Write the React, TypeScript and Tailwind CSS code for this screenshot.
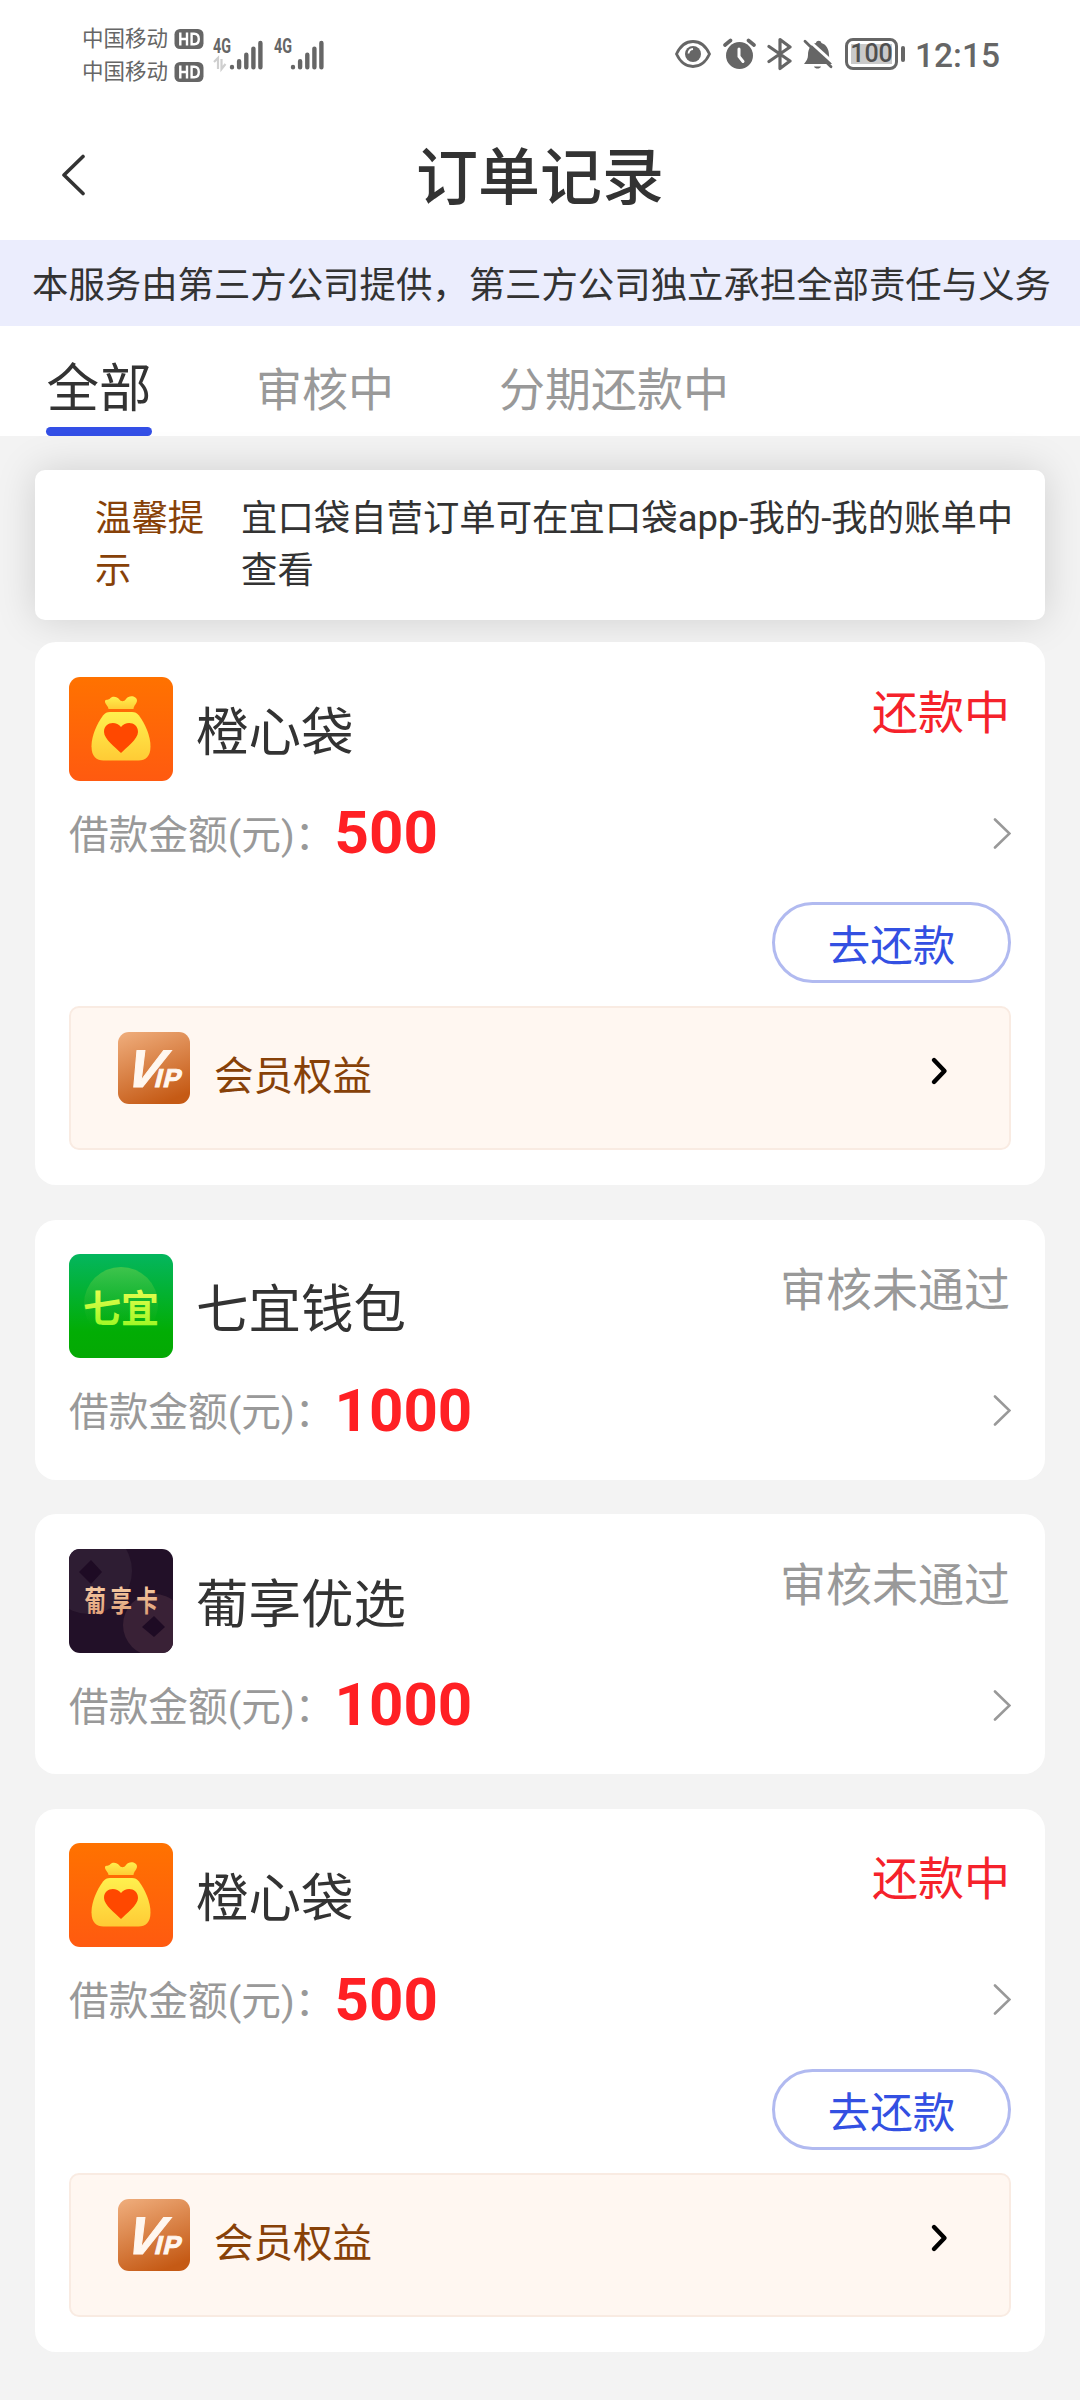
import type { ReactNode } from "react";

function HdBadge() {
  return (
    <svg width="30" height="20" viewBox="0 0 30 20" className="ml-[6px]">
      <rect x="0.5" y="0" width="29" height="20" rx="5.5" fill="#666" />
      <g stroke="#fff" strokeWidth="2.4" fill="none">
        <path d="M6.3 3.6v12.8M13 3.6v12.8M6.3 10H13" />
        <path d="M17.6 4.7h2.6c2.8 0 4.6 2 4.6 5.3s-1.8 5.3-4.6 5.3h-2.6z" />
      </g>
    </svg>
  );
}

function Carrier() {
  return (
    <div className="flex h-[33px] items-center text-[21.5px] leading-[33px] text-[#666]">
      <span>中国移动</span>
      <HdBadge />
    </div>
  );
}

function Signal({ data = false }: { data?: boolean }) {
  return (
    <svg width="61" height="40" viewBox="0 0 61 40">
      <text
        x="2"
        y="18"
        fontFamily="Roboto"
        fontWeight="700"
        fontSize="19.5"
        fill="#666"
        textLength="18"
        lengthAdjust="spacingAndGlyphs"
      >
        4G
      </text>
      {data && (
        <g stroke="#cfcfcf" strokeWidth="2.2" fill="none">
          <path d="M3 27l4-4v11M10.5 24v10l4-5" />
        </g>
      )}
      <g stroke="#666" strokeWidth="4.4" strokeLinecap="round">
        <path d="M21 32v.2M28.1 26.2v6M35.3 19.8v12.4M42.4 13.6v18.6M49.4 8v24.2" />
      </g>
    </svg>
  );
}

function StatusBar() {
  return (
    <div className="flex h-[112px] shrink-0 items-start pl-[82px] pr-[80px] text-[#666]">
      <div className="mt-[22px] flex flex-col">
        <Carrier />
        <Carrier />
      </div>
      <div className="ml-[7px] mt-[35px] flex">
        <Signal data />
        <Signal />
      </div>
      <div className="ml-auto mt-[32px] flex h-[44px] items-center">
        <svg width="38" height="30" viewBox="0 0 38 30">
          <path
            d="M2.5 15C6 7.5 12 2.5 19 2.5S32 7.5 35.5 15C32 22.5 26 27.5 19 27.5S6 22.5 2.5 15z"
            fill="none"
            stroke="#666"
            strokeWidth="2.8"
          />
          <circle cx="19" cy="15" r="8" fill="#666" />
          <path d="M14.5 14.5a5 5 0 0 1 4.5-4.5" stroke="#fff" strokeWidth="1.8" fill="none" />
        </svg>
        <svg width="33" height="32" viewBox="0 0 33 32" className="ml-[11px]">
          <circle cx="16.5" cy="17.5" r="13.5" fill="#666" />
          <path d="M2 7l5.5-4.5M31 7l-5.5-4.5" stroke="#fff" strokeWidth="6" />
          <path d="M2 7l5.5-4.5M31 7l-5.5-4.5" stroke="#666" strokeWidth="3.6" strokeLinecap="round" />
          <path d="M16 11v7.5l4 5" stroke="#fff" strokeWidth="3" strokeLinecap="round" fill="none" />
        </svg>
        <svg width="26" height="34" viewBox="0 0 26 34" className="ml-[11px]">
          <path
            d="M2 9.500L23 24 13 31.500V2.500L23 10 2 24.500"
            fill="none"
            stroke="#666"
            strokeWidth="3.200"
            strokeLinejoin="round"
            strokeLinecap="round"
          />
        </svg>
        <svg width="30" height="32" viewBox="0 0 30 32" className="ml-[10px]">
          <path
            d="M1 26c2.500-3 4-5.500 4-9 0-6 3-11 8-12 .4-3 5-3 5.400 0 4.600 1.400 7.600 6 7.600 12 0 3.500 1 6 3 9z"
            fill="#666"
          />
          <path d="M11 28.500h7c-1 2.700-6 2.700-7 0z" fill="#666" />
          <path d="M3.500 0.500L31 25.500" stroke="#fff" strokeWidth="3" />
          <path d="M2 3.300l26 25.400" stroke="#666" strokeWidth="2.800" strokeLinecap="round" />
        </svg>
        <div className="ml-[12px] flex items-center">
          <div className="flex h-[32px] w-[53px] items-center justify-center rounded-[8px] border-[3px] border-[#666] p-[3px]">
            <div className="flex h-[20px] w-full items-center justify-center bg-[#c9c9c9] text-[25px] leading-[20px] font-medium text-[#4f4f4f]">
              100
            </div>
          </div>
          <div className="ml-[3px] h-[16px] w-[4px] rounded-full bg-[#666]" />
        </div>
        <span className="ml-[10px] mt-[3px] text-[33.500px] leading-[44px] font-medium">12:15</span>
      </div>
    </div>
  );
}

function BagIcon() {
  return (
    <svg width="104" height="104" viewBox="0 0 104 104" className="rounded-[11px]">
      <defs>
        <linearGradient id="bag-bg" x1="0" y1="0" x2="0" y2="1">
          <stop offset="0" stopColor="#ff7200" />
          <stop offset="1" stopColor="#ff5a10" />
        </linearGradient>
        <linearGradient id="bag-fill" x1="0" y1="0" x2="0" y2="1">
          <stop offset="0" stopColor="#fff04e" />
          <stop offset="1" stopColor="#ffcb35" />
        </linearGradient>
      </defs>
      <rect width="104" height="104" fill="url(#bag-bg)" />
      <path
        d="M39.500 32c0-3-4-5-3.500-8 0-1.500 3-1 4.500-2 3-4 8-2 9.500 0 2 3 5 3 7 0 3-4.500 11-3 11 1.500 0 3-3 4.500-3.500 8.500z"
        fill="url(#bag-fill)"
      />
      <path
        d="M41 35h22c3 0 5 1 7 3.500 6 8 11.500 20 11.500 31 0 10-5 14-12 14h-35c-7 0-12-4-12-14 0-11 5.500-23 11.500-31 2-2.500 4-3.500 7-3.500z"
        fill="url(#bag-fill)"
      />
      <path
        d="M52 76C47 71 35 62 35 55c0-10 12-11.500 17-5 5-6.500 17-5 17 5 0 7-12 16-17 21z"
        fill="#ff4800"
      />
    </svg>
  );
}

function SevenIcon() {
  return (
    <svg width="104" height="104" viewBox="0 0 104 104" className="rounded-[11px]">
      <defs>
        <linearGradient id="seven-bg" x1="0" y1="0" x2="0" y2="1">
          <stop offset="0" stopColor="#04b65e" />
          <stop offset="0.75" stopColor="#02ad04" />
          <stop offset="1" stopColor="#04a904" />
        </linearGradient>
        <linearGradient id="seven-disc" x1="0" y1="0" x2="0" y2="1">
          <stop offset="0" stopColor="#3fc44c" />
          <stop offset="0.8" stopColor="#20b520" stopOpacity="0" />
        </linearGradient>
        <linearGradient id="seven-text" x1="0" y1="0" x2="0" y2="1">
          <stop offset="0" stopColor="#ffff5c" />
          <stop offset="1" stopColor="#92f71e" />
        </linearGradient>
      </defs>
      <rect width="104" height="104" fill="url(#seven-bg)" />
      <circle cx="52" cy="50" r="37" fill="url(#seven-disc)" />
      <text
        x="14"
        y="67.500"
        fontFamily="Noto Sans CJK SC"
        fontWeight="700"
        fontSize="38"
        fill="url(#seven-text)"
        textLength="76"
      >
        七宜
      </text>
    </svg>
  );
}

function GrapeIcon() {
  return (
    <svg width="104" height="104" viewBox="0 0 104 104" className="rounded-[11px]">
      <defs>
        <linearGradient id="grape-text" x1="0" y1="0" x2="0" y2="1">
          <stop offset="0" stopColor="#fbd6ae" />
          <stop offset="1" stopColor="#dd9a72" />
        </linearGradient>
      </defs>
      <rect width="104" height="104" fill="#221028" />
      <circle cx="20" cy="22" r="43" fill="#2e1d33" />
      <path d="M10 23l12-12 11 12-11 12z" fill="#1e0b24" />
      <circle cx="85" cy="76" r="31" fill="#392136" />
      <path d="M73 78l12-11 11 11-11 10z" fill="#1e0b24" />
      <text
        transform="translate(15.500 62.500) scale(0.74 1)"
        fontFamily="Noto Sans CJK SC"
        fontWeight="700"
        fontSize="29"
        letterSpacing="6"
        fill="url(#grape-text)"
      >
        葡享卡
      </text>
    </svg>
  );
}

function VipIcon() {
  return (
    <svg width="72" height="72" viewBox="0 0 72 72" className="rounded-[11px]">
      <defs>
        <linearGradient id="vip-bg" x1="0.2" y1="0" x2="0.6" y2="1">
          <stop offset="0" stopColor="#eda977" />
          <stop offset="1" stopColor="#c55a15" />
        </linearGradient>
      </defs>
      <rect width="72" height="72" fill="url(#vip-bg)" />
      <text
        transform="translate(11.500 55) skewX(-14)"
        fill="#fff7f0"
        stroke="#fff7f0"
        strokeWidth="1"
        fontFamily="Liberation Sans"
        fontWeight="700"
      >
        <tspan x="-6" fontSize="53" fontStyle="italic">
          V
        </tspan>
        <tspan x="24" fontSize="26">
          I
        </tspan>
        <tspan x="32.500" fontSize="26">
          P
        </tspan>
      </text>
    </svg>
  );
}

type Order = {
  name: string;
  amount: number;
  status: string;
  icon: ReactNode;
  repay?: boolean;
};

const orders: Order[] = [
  { name: "橙心袋", amount: 500, status: "还款中", icon: <BagIcon />, repay: true },
  { name: "七宜钱包", amount: 1000, status: "审核未通过", icon: <SevenIcon /> },
  { name: "葡享优选", amount: 1000, status: "审核未通过", icon: <GrapeIcon /> },
  { name: "橙心袋", amount: 500, status: "还款中", icon: <BagIcon />, repay: true },
];

function OrderCard({ name, amount, status, icon, repay }: Order) {
  return (
    <section
      className={`flex shrink-0 flex-col rounded-[21px] bg-white px-[34px] pt-[34.500px] ${repay ? "h-[543px]" : "h-[260px]"}`}
    >
      <div className="flex h-[104px] shrink-0 items-center">
        {icon}
        <h2 className="ml-[23px] mt-[8px] text-[52.500px] leading-[60px] text-[#333]">{name}</h2>
        <span
          className={`ml-auto mr-px mt-[7px] self-start text-[46px] leading-[58px] ${repay ? "text-[#f5222b]" : "text-[#999]"}`}
        >
          {status}
        </span>
      </div>
      <div className="mt-[22px] flex h-[60px] shrink-0 items-center">
        <span className="mt-[6px] text-[39.700px] leading-[60px] text-[#999]">借款金额(元)：</span>
        <strong className="mt-px text-[60px] leading-[60px] font-bold text-[#ff2024]">{amount}</strong>
        <svg width="20" height="32" viewBox="0 0 20 32" className="ml-auto">
          <path d="M4 2.500l14.500 14L4 30.500" fill="none" stroke="#999" strokeWidth="2.600" strokeLinecap="round" />
        </svg>
      </div>
      {repay && (
        <>
          <button className="mt-[39.500px] flex h-[81px] w-[239px] shrink-0 items-center justify-center self-end rounded-full border-[3px] border-[#b1baf0] pt-[9px] text-[42.500px] leading-[60px] text-[#3350e2]">
            去还款
          </button>
          <div className="mt-[23px] flex h-[144px] shrink-0 items-start rounded-[10px] border-2 border-[#f9ebe2] bg-[#fff7f1] pl-[47px] pr-[59px] pt-[24px]">
            <VipIcon />
            <span className="ml-[24px] mt-[15px] text-[39.500px] leading-[60px] text-[#874108]">会员权益</span>
            <svg width="20" height="32" viewBox="0 0 20 32" className="ml-auto mt-[23px]">
              <path
                d="M4 5l10.500 11L4 27"
                fill="none"
                stroke="#000"
                strokeWidth="4.400"
                strokeLinecap="round"
                strokeLinejoin="round"
              />
            </svg>
          </div>
        </>
      )}
    </section>
  );
}

export default function App() {
  return (
    <div className="flex h-[2400px] w-[1080px] flex-col overflow-hidden bg-[#f3f3f3] font-[Roboto,'Noto_Sans_CJK_SC',sans-serif]">
      <header className="shrink-0 bg-white">
        <StatusBar />
        <div className="grid h-[128px] grid-cols-[200px_1fr_200px] items-center">
          <svg width="28" height="44" viewBox="0 0 28 44" className="ml-[60px]">
            <path
              d="M23 2.500L4 21l19 18.500"
              fill="none"
              stroke="#333"
              strokeWidth="3.600"
              strokeLinecap="round"
              strokeLinejoin="round"
            />
          </svg>
          <h1 className="mt-[5px] text-center text-[62px] leading-[80px] font-medium text-[#333]">订单记录</h1>
        </div>
      </header>
      <div className="flex h-[86px] shrink-0 items-center bg-[#ebedfd] pl-[32px] pt-[7px] text-[36.400px] whitespace-nowrap text-[#333]">
        本服务由第三方公司提供，第三方公司独立承担全部责任与义务
      </div>
      <nav className="flex h-[110px] shrink-0 bg-white pl-[46px] text-[46px] text-[#999]">
        <div className="flex w-[106px] flex-col items-center justify-between text-[52.500px] text-[#333]">
          <span className="mt-[33px] leading-[60px]">全部</span>
          <i className="h-[9px] w-full rounded-[5px] bg-[#334fe6]" />
        </div>
        <span className="ml-[104px] mt-[34px] leading-[60px]">审核中</span>
        <span className="ml-[105px] mt-[34px] leading-[60px]">分期还款中</span>
      </nav>
      <main className="flex flex-col px-[35px] pt-[34px]">
        <div className="flex h-[150px] shrink-0 rounded-[10px] bg-white pl-[60px] pt-[23px] text-[36.400px] leading-[52px] shadow-[0_0_40px_rgba(0,0,0,0.15)]">
          <p className="w-[120px] text-[#874108]">温馨提示</p>
          <p className="ml-[26px] w-[776px] text-[#333]">宜口袋自营订单可在宜口袋app-我的-我的账单中查看</p>
        </div>
        <div className="z-10 mt-[22px] flex flex-col gap-[34.600px]">
          {orders.map((order, i) => (
            <OrderCard key={i} {...order} />
          ))}
        </div>
      </main>
    </div>
  );
}
